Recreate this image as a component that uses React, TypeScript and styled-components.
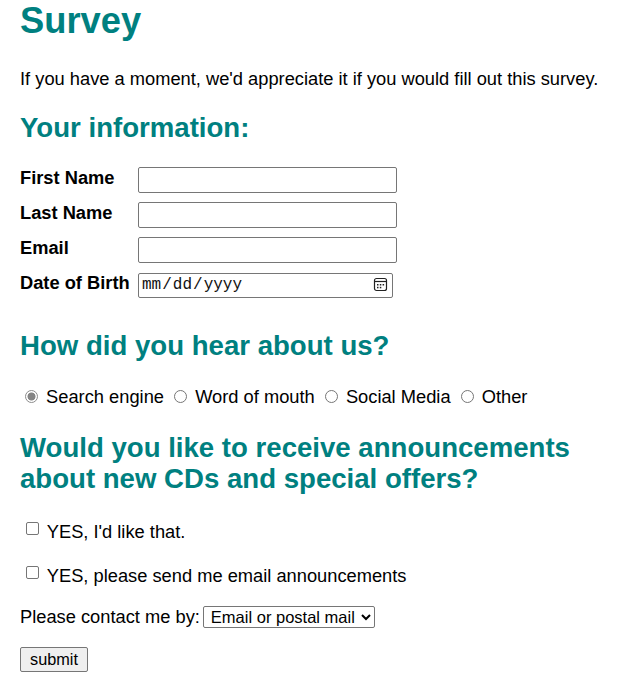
import React from "react";
import styled, { createGlobalStyle } from "styled-components";

const GlobalStyle = createGlobalStyle`
  html, body {
    margin: 0;
    padding: 0;
    background: #ffffff;
  }
  body {
    font-family: "Liberation Sans", Arial, sans-serif;
    font-size: 18.3px;
    line-height: 21px;
    color: #000000;
  }
  * { box-sizing: border-box; }
`;

const Page = styled.main`
  padding: 0 20px;
  display: flex;
  flex-direction: column;
  align-items: flex-start;
`;

const Title = styled.h1`
  margin: 0;
  font-size: 36.3px;
  line-height: 41px;
  font-weight: bold;
  color: #008080;
`;

const Intro = styled.p`
  margin: 27px 0 0;
  white-space: nowrap;
`;

const SectionTitle = styled.h2<{ $top: number }>`
  margin: ${(p) => p.$top}px 0 0;
  font-size: 27.6px;
  line-height: 31px;
  font-weight: bold;
  color: #008080;
`;

const InfoGrid = styled.div`
  margin-top: 24px;
  display: grid;
  grid-template-columns: 118px auto;
  row-gap: 9px;
  align-items: start;
  justify-items: start;
`;

const FieldLabel = styled.label`
  font-weight: bold;
  line-height: 21px;
`;

const TextInput = styled.input`
  width: 259px;
  height: 26px;
  border: 1px solid #767676;
  border-radius: 2px;
  padding: 1px 2px;
  font-family: "Liberation Sans", Arial, sans-serif;
  font-size: 16px;
  background: #fff;
`;

const DateField = styled.div`
  position: relative;
  width: 255px;
  height: 25px;
`;

const DateInput = styled.input`
  width: 255px;
  height: 25px;
  border: 1px solid #767676;
  border-radius: 2px;
  padding: 0 2px 0 2px;
  font-family: "Liberation Mono", "DejaVu Sans Mono", monospace;
  font-size: 16px;
  color: #111;
  background: #fff;
  &::-webkit-calendar-picker-indicator {
    opacity: 0;
  }
`;

const CalendarIcon = styled.svg`
  position: absolute;
  right: 5px;
  top: 5px;
  width: 15px;
  height: 15px;
  pointer-events: none;
`;

const ChoiceLine = styled.div<{ $top: number }>`
  margin-top: ${(p) => p.$top}px;
  height: 21px;
  line-height: 21px;
  white-space: nowrap;
`;

const Radio = styled.input.attrs({ type: "radio" })`
  appearance: none;
  -webkit-appearance: none;
  width: 13px;
  height: 13px;
  margin: 0 3px 0 5px;
  border: 1px solid #767676;
  border-radius: 50%;
  background: #fff;
  vertical-align: 0;
  display: inline-block;
  &:checked {
    border-color: #8c8c8c;
    background: radial-gradient(circle, #858585 0 3.6px, #ffffff 4.4px);
  }
`;

const Checkbox = styled.input.attrs({ type: "checkbox" })`
  appearance: none;
  -webkit-appearance: none;
  width: 13px;
  height: 13px;
  margin: 0 3px 0 6px;
  border: 1px solid #767676;
  border-radius: 2px;
  background: #fff;
  vertical-align: 3px;
  display: inline-block;
`;

const ContactRow = styled.div`
  margin-top: 20px;
  display: flex;
  align-items: baseline;
  gap: 3px;
`;

const Select = styled.select`
  height: 22px;
  border: 1px solid #767676;
  border-radius: 2px;
  font-family: "Liberation Sans", Arial, sans-serif;
  font-size: 16.5px;
  color: #000;
  background: #fff;
  padding: 0 3px 0 3px;
`;

const SubmitButton = styled.button`
  margin-top: 19px;
  height: 25px;
  padding: 1px 9px;
  border: 1px solid #767676;
  border-radius: 2px;
  background: #efefef;
  font-family: "Liberation Sans", Arial, sans-serif;
  font-size: 16.3px;
  color: #000;
`;

export default function App() {
  return (
    <>
      <GlobalStyle />
      <Page>
        <Title>Survey</Title>
        <Intro>If you have a moment, we'd appreciate it if you would fill out this survey.</Intro>

        <SectionTitle $top={23}>Your information:</SectionTitle>
        <InfoGrid>
          <FieldLabel htmlFor="first">First Name</FieldLabel>
          <TextInput id="first" type="text" />
          <FieldLabel htmlFor="last">Last Name</FieldLabel>
          <TextInput id="last" type="text" />
          <FieldLabel htmlFor="email">Email</FieldLabel>
          <TextInput id="email" type="email" />
          <FieldLabel htmlFor="dob">Date of Birth</FieldLabel>
          <DateField>
            <DateInput id="dob" type="date" />
            <CalendarIcon viewBox="0 0 15 15" aria-hidden="true">
              <rect x="1.5" y="1.5" width="12" height="12" rx="2" fill="none" stroke="#222" strokeWidth="1.2" />
              <line x1="1.5" y1="4.5" x2="13.5" y2="4.5" stroke="#222" strokeWidth="1.2" />
              <rect x="4" y="7" width="1.5" height="1.5" fill="#222" />
              <rect x="6.8" y="7" width="1.5" height="1.5" fill="#222" />
              <rect x="9.6" y="7" width="1.5" height="1.5" fill="#222" />
              <rect x="4" y="9.8" width="1.5" height="1.5" fill="#222" />
              <rect x="6.8" y="9.8" width="1.5" height="1.5" fill="#222" />
            </CalendarIcon>
          </DateField>
        </InfoGrid>

        <SectionTitle $top={33}>How did you hear about us?</SectionTitle>
        <ChoiceLine $top={25}>
          <Radio name="hear" defaultChecked /> Search engine{" "}
          <Radio name="hear" /> Word of mouth{" "}
          <Radio name="hear" /> Social Media{" "}
          <Radio name="hear" /> Other
        </ChoiceLine>

        <SectionTitle $top={25}>
          Would you like to receive announcements about new CDs and special offers?
        </SectionTitle>
        <ChoiceLine $top={27}>
          <Checkbox /> YES, I'd like that.
        </ChoiceLine>
        <ChoiceLine $top={23}>
          <Checkbox /> YES, please send me email announcements
        </ChoiceLine>

        <ContactRow>
          <span>Please contact me by:</span>
          <Select defaultValue="both">
            <option value="both">Email or postal mail</option>
            <option value="email">Email only</option>
            <option value="postal">Postal mail only</option>
          </Select>
        </ContactRow>

        <SubmitButton type="submit">submit</SubmitButton>
      </Page>
    </>
  );
}
